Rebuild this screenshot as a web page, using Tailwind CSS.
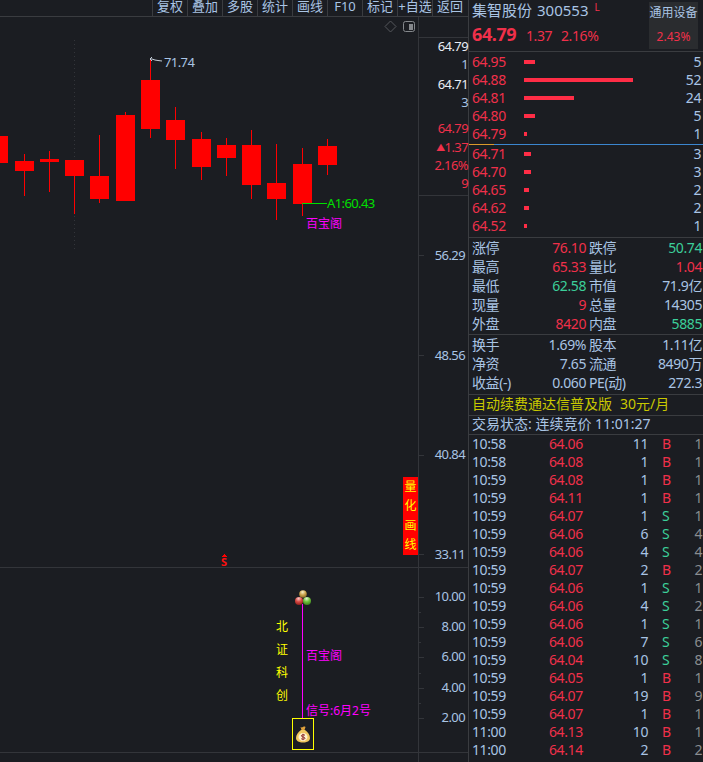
<!DOCTYPE html>
<html lang="zh">
<head>
<meta charset="UTF-8">
<title>集智股份</title>
<script src="https://cdn.jsdelivr.net/npm/@tailwindcss/browser@4"></script>
</head>
<body class="bg-[#1b1d22] overflow-hidden font-['Noto_Sans','Noto_Sans_CJK_SC',sans-serif] text-[14px] text-[#a9c4e4]">
<div class="flex w-[703px] h-[762px] overflow-hidden">

  <!-- chart side -->
  <div class="w-[469px] h-full flex flex-col border-r border-[#3a3c40] shrink-0">
    <div class="h-[17px] flex justify-end border-b border-[#3a3c40] overflow-hidden leading-[12px] text-[13px] shrink-0 pr-[1px]">
      <div class="w-[35px] border-l border-[#3a3c40] text-center">复权</div>
      <div class="w-[35px] border-l border-[#3a3c40] text-center">叠加</div>
      <div class="w-[35px] border-l border-[#3a3c40] text-center">多股</div>
      <div class="w-[35px] border-l border-[#3a3c40] text-center">统计</div>
      <div class="w-[35px] border-l border-[#3a3c40] text-center">画线</div>
      <div class="w-[35px] border-l border-[#3a3c40] text-center">F10</div>
      <div class="w-[35px] border-l border-[#3a3c40] text-center">标记</div>
      <div class="w-[35px] border-l border-[#3a3c40] text-center whitespace-nowrap">+自选</div>
      <div class="w-[35px] border-l border-[#3a3c40] text-center">返回</div>
    </div>

    <!-- free canvas: candles, axis labels and signals sit at their chart positions -->
    <div class="relative flex-1 text-[13px] tracking-[-0.6px]">
      <svg class="absolute left-0 top-0" width="468" height="745" viewBox="0 17 468 745" shape-rendering="crispEdges">
        <line x1="74.5" y1="40" x2="74.5" y2="250" stroke="#33353a" stroke-dasharray="1 3"/>
        <line x1="418.5" y1="17" x2="418.5" y2="762" stroke="#33353a"/>
        <line x1="418" y1="37.5" x2="468" y2="37.5" stroke="#33353a"/>
        <line x1="418" y1="195.5" x2="468" y2="195.5" stroke="#33353a"/>
        <line x1="0" y1="567.5" x2="468" y2="567.5" stroke="#33353a"/>
        <line x1="0" y1="752.5" x2="468" y2="752.5" stroke="#33353a"/>
        <g fill="#ff0000">
          <rect x="0" y="136" width="8" height="27"/>
          <rect x="24" y="154" width="1" height="42"/><rect x="15" y="161" width="19" height="10"/>
          <rect x="49" y="151" width="1" height="41"/><rect x="40" y="159" width="19" height="3"/>
          <rect x="74" y="160" width="1" height="54"/><rect x="65" y="160" width="19" height="16"/>
          <rect x="99" y="135" width="1" height="68"/><rect x="90" y="176" width="19" height="23"/>
          <rect x="125" y="112" width="1" height="89"/><rect x="116" y="115" width="19" height="86"/>
          <rect x="150" y="58" width="1" height="80"/><rect x="141" y="80" width="19" height="49"/>
          <rect x="175" y="107" width="1" height="62"/><rect x="166" y="120" width="19" height="20"/>
          <rect x="201" y="132" width="1" height="48"/><rect x="192" y="139" width="19" height="28"/>
          <rect x="226" y="138" width="1" height="38"/><rect x="217" y="145" width="19" height="13"/>
          <rect x="251" y="130" width="1" height="69"/><rect x="242" y="145" width="19" height="40"/>
          <rect x="276" y="144" width="1" height="76"/><rect x="267" y="183" width="19" height="16"/>
          <rect x="302" y="148" width="1" height="68"/><rect x="293" y="164" width="19" height="40"/>
          <rect x="327" y="139" width="1" height="36"/><rect x="318" y="146" width="19" height="19"/>
          <!-- small arrow above the S marker -->
          <rect x="224" y="554" width="1" height="1"/><rect x="223" y="555" width="3" height="1"/><rect x="222" y="556" width="5" height="1"/>
        </g>
        <line x1="302" y1="203.5" x2="327" y2="203.5" stroke="#00e000"/>
        <!-- axis ticks -->
        <g stroke="#33353a">
          <line x1="418" y1="255.5" x2="424" y2="255.5"/><line x1="418" y1="355.5" x2="424" y2="355.5"/>
          <line x1="418" y1="455.5" x2="424" y2="455.5"/><line x1="418" y1="554.5" x2="424" y2="554.5"/>
          <line x1="418" y1="597.5" x2="424" y2="597.5"/><line x1="418" y1="612.5" x2="421" y2="612.5"/>
          <line x1="418" y1="627.5" x2="424" y2="627.5"/><line x1="418" y1="642.5" x2="421" y2="642.5"/>
          <line x1="418" y1="657.5" x2="424" y2="657.5"/><line x1="418" y1="673.5" x2="421" y2="673.5"/>
          <line x1="418" y1="688.5" x2="424" y2="688.5"/><line x1="418" y1="703.5" x2="421" y2="703.5"/>
          <line x1="418" y1="718.5" x2="424" y2="718.5"/>
        </g>
        <rect x="302" y="604" width="1" height="114" fill="#ff00ff"/>
      </svg>

      <!-- top-right tools -->
      <svg class="absolute left-[384px] top-[3px]" width="32" height="14" viewBox="0 0 32 14" fill="none">
        <path d="M6.500 1l5.500 5.500-5.500 5.500-5.500-5.500z" stroke="#55575c"/>
        <rect x="19.500" y="1.500" width="11" height="10" rx="2" stroke="#85888c"/>
        <rect x="25" y="4" width="4" height="6" fill="#85888c"/>
      </svg>

      <!-- price high marker -->
      <svg class="absolute left-[149px] top-[39px]" width="14" height="8" viewBox="0 0 14 8" fill="none" stroke="#c4cdd8">
        <path d="M1 3h2M1 3l2-2M1 3l2 2M3 3l3 1 3 .5 4 .5"/>
      </svg>
      <div class="absolute left-[164px] top-[36px] leading-[18px]">71.74</div>
      <div class="absolute left-[327px] top-[177px] leading-[18px] text-[#00e000]">A1:60.43</div>
      <div class="absolute left-[306px] top-[198px] leading-[18px] text-[#ff00ff] text-[12px] tracking-normal">百宝阁</div>

      <!-- axis labels -->
      <div class="absolute left-[419px] w-[49px] text-right top-[21px] leading-[16px] text-[#e8eef6]">64.79</div>
      <div class="absolute left-[419px] w-[49px] text-right top-[39px] leading-[16px]">1</div>
      <div class="absolute left-[419px] w-[49px] text-right top-[59px] leading-[16px] text-[#e8eef6]">64.71</div>
      <div class="absolute left-[419px] w-[49px] text-right top-[77px] leading-[16px]">3</div>
      <div class="absolute left-[419px] w-[49px] text-right top-[103px] leading-[16px] text-[#f0304a]">64.79</div>
      <div class="absolute left-[419px] w-[49px] text-right top-[122px] leading-[16px] text-[#f0304a] whitespace-nowrap"><span class="text-[9px] align-[1px]">▲</span>1.37</div>
      <div class="absolute left-[419px] w-[49px] text-right top-[140px] leading-[16px] text-[#f0304a]">2.16%</div>
      <div class="absolute left-[419px] w-[49px] text-right top-[158px] leading-[16px] text-[#f0304a]">9</div>
      <div class="absolute left-[419px] w-[46px] text-right top-[230px] leading-[16px]">56.29</div>
      <div class="absolute left-[419px] w-[46px] text-right top-[330px] leading-[16px]">48.56</div>
      <div class="absolute left-[419px] w-[46px] text-right top-[429px] leading-[16px]">40.84</div>
      <div class="absolute left-[419px] w-[46px] text-right top-[529px] leading-[16px]">33.11</div>
      <div class="absolute left-[419px] w-[46px] text-right top-[571px] leading-[16px]">10.00</div>
      <div class="absolute left-[419px] w-[46px] text-right top-[601px] leading-[16px]">8.00</div>
      <div class="absolute left-[419px] w-[46px] text-right top-[631px] leading-[16px]">6.00</div>
      <div class="absolute left-[419px] w-[46px] text-right top-[662px] leading-[16px]">4.00</div>
      <div class="absolute left-[419px] w-[46px] text-right top-[692px] leading-[16px]">2.00</div>

      <!-- 量化画线 tag -->
      <div class="absolute left-[403px] top-[460px] w-[15px] h-[78px] bg-[#ff0000] text-[#ffff00] text-[12px] tracking-normal flex flex-col justify-around items-center leading-[14px]">
        <span>量</span><span>化</span><span>画</span><span>线</span>
      </div>
      <div class="absolute left-[221px] top-[539px] text-[#ff1010] text-[11px] leading-[11px] font-bold tracking-normal">S</div>

      <!-- signal pane -->
      <svg class="absolute left-[294px] top-[572px]" width="18" height="18" viewBox="0 0 18 18">
        <defs>
          <radialGradient id="ballGold" cx=".45" cy=".25" r=".8"><stop offset="0" stop-color="#f8f0c8"/><stop offset=".5" stop-color="#c9a24a"/><stop offset="1" stop-color="#7d6020"/></radialGradient>
          <radialGradient id="ballRed" cx=".45" cy=".2" r=".8"><stop offset="0" stop-color="#f6c8c6"/><stop offset=".5" stop-color="#d94a44"/><stop offset="1" stop-color="#8f1f1c"/></radialGradient>
          <radialGradient id="ballGreen" cx=".45" cy=".2" r=".8"><stop offset="0" stop-color="#e2f6cf"/><stop offset=".5" stop-color="#6fc23a"/><stop offset="1" stop-color="#3c7d1c"/></radialGradient>
        </defs>
        <circle cx="9" cy="5" r="3.800" fill="url(#ballGold)"/>
        <circle cx="5" cy="12" r="4" fill="url(#ballRed)"/>
        <circle cx="13" cy="12" r="4" fill="url(#ballGreen)"/>
      </svg>
      <div class="absolute left-[276px] top-[603px] w-[12px] text-[#ffff00] text-[12px] tracking-normal flex flex-col gap-[9px] leading-[14px]">
        <span>北</span><span>证</span><span>科</span><span>创</span>
      </div>
      <div class="absolute left-[306px] top-[630px] leading-[18px] text-[#ff00ff] text-[12px] tracking-normal">百宝阁</div>
      <div class="absolute left-[306px] top-[685px] leading-[18px] text-[#ff00ff] text-[12px] tracking-normal whitespace-nowrap">信号:6月2号</div>
      <div class="absolute left-[292px] top-[701px] w-[22px] h-[32px] border border-[#ffff00] flex items-center justify-center">
        <svg width="14" height="17" viewBox="0 0 14 17">
          <path d="M4.500 1c1 .6 1.500.6 2.500 0s1.500-.6 2.500 0l-1 3h-3z" fill="#e0a23c"/>
          <path d="M5 4h4c3 2 5 5 5 8 0 3-3 4.500-7 4.500s-7-1.500-7-4.500c0-3 2-6 5-8z" fill="#f0c860"/>
          <ellipse cx="7" cy="11" rx="4.500" ry="4" fill="#fff3d0"/>
          <path d="M9 9.300c-1-.9-3.600-.8-3.600.6 0 1.500 3.600.8 3.600 2.300 0 1.300-2.800 1.300-3.800.5M7 7.800v6.400" fill="none" stroke="#8e2d28" stroke-width="1"/>
        </svg>
      </div>
    </div>
  </div>

  <!-- quote side -->
  <div class="flex-1 flex flex-col min-w-0 pl-[3px] leading-[18px] whitespace-nowrap overflow-hidden tracking-[-0.4px]">
    <div class="h-[51px] relative shrink-0 -ml-[3px] pl-[3px]">
      <div class="flex items-baseline gap-[5px] tracking-normal">
        <span class="text-[15px] leading-[20px]">集智股份</span>
        <span class="text-[15px] leading-[20px]">300553</span>
        <span class="text-[#f0304a] text-[10px] leading-[12px] self-start ml-[1px] mt-[1px]">L</span>
      </div>
      <div class="flex items-baseline text-[#f0304a] mt-[3px] leading-[22px]">
        <span class="text-[18px] font-bold w-[54px]">64.79</span>
        <span class="w-[35px]">1.37</span>
        <span>2.16%</span>
      </div>
      <div class="absolute right-[5px] top-[2px] w-[49px] h-[47px] bg-[#2a2c2f] text-center text-[12px] tracking-normal">
        <div class="leading-[20px] mt-[1px]">通用设备</div>
        <div class="leading-[20px] mt-[4px] text-[#f0304a]">2.43%</div>
      </div>
    </div>

    <div class="border-t border-[#3a3c40] -ml-[3px] pl-[3px] pr-[2px] pt-[1px] h-[93px] flex flex-col shrink-0">
      <div class="h-[18px] flex items-center"><span class="w-[52px] text-[#f0304a]">64.95</span><i class="block h-[4px] bg-[#ff2d46] w-[11px]"></i><span class="ml-auto">5</span></div>
      <div class="h-[18px] flex items-center"><span class="w-[52px] text-[#f0304a]">64.88</span><i class="block h-[4px] bg-[#ff2d46] w-[109px]"></i><span class="ml-auto">52</span></div>
      <div class="h-[18px] flex items-center"><span class="w-[52px] text-[#f0304a]">64.81</span><i class="block h-[4px] bg-[#ff2d46] w-[50px]"></i><span class="ml-auto">24</span></div>
      <div class="h-[18px] flex items-center"><span class="w-[52px] text-[#f0304a]">64.80</span><i class="block h-[4px] bg-[#ff2d46] w-[11px]"></i><span class="ml-auto">5</span></div>
      <div class="h-[18px] flex items-center"><span class="w-[52px] text-[#f0304a]">64.79</span><i class="block h-[4px] bg-[#ff2d46] w-[3px]"></i><span class="ml-auto">1</span></div>
    </div>
    <div class="h-[1px] -ml-[3px] bg-[#3b86cf] shrink-0"><div class="h-full w-[25px] bg-[#d99a2b]"></div></div>
    <div class="h-[92px] pr-[2px] flex flex-col shrink-0">
      <div class="h-[18px] flex items-center"><span class="w-[52px] text-[#f0304a]">64.71</span><i class="block h-[4px] bg-[#ff2d46] w-[7px]"></i><span class="ml-auto">3</span></div>
      <div class="h-[18px] flex items-center"><span class="w-[52px] text-[#f0304a]">64.70</span><i class="block h-[4px] bg-[#ff2d46] w-[7px]"></i><span class="ml-auto">3</span></div>
      <div class="h-[18px] flex items-center"><span class="w-[52px] text-[#f0304a]">64.65</span><i class="block h-[4px] bg-[#ff2d46] w-[5px]"></i><span class="ml-auto">2</span></div>
      <div class="h-[18px] flex items-center"><span class="w-[52px] text-[#f0304a]">64.62</span><i class="block h-[4px] bg-[#ff2d46] w-[5px]"></i><span class="ml-auto">2</span></div>
      <div class="h-[18px] flex items-center"><span class="w-[52px] text-[#f0304a]">64.52</span><i class="block h-[4px] bg-[#ff2d46] w-[3px]"></i><span class="ml-auto">1</span></div>
    </div>

    <div class="border-t border-[#3a3c40] -ml-[3px] pl-[3px] pr-[1px] h-[97px] shrink-0 grid grid-cols-[117px_1fr] auto-rows-[19px] items-start leading-[19px]">
      <div class="flex justify-between pr-[3px]"><span>涨停</span><span class="text-[#f0304a]">76.10</span></div>
      <div class="flex justify-between"><span>跌停</span><span class="text-[#3ccf9a]">50.74</span></div>
      <div class="flex justify-between pr-[3px]"><span>最高</span><span class="text-[#f0304a]">65.33</span></div>
      <div class="flex justify-between"><span>量比</span><span class="text-[#f0304a]">1.04</span></div>
      <div class="flex justify-between pr-[3px]"><span>最低</span><span class="text-[#3ccf9a]">62.58</span></div>
      <div class="flex justify-between"><span>市值</span><span>71.9亿</span></div>
      <div class="flex justify-between pr-[3px]"><span>现量</span><span class="text-[#f0304a]">9</span></div>
      <div class="flex justify-between"><span>总量</span><span>14305</span></div>
      <div class="flex justify-between pr-[3px]"><span>外盘</span><span class="text-[#f0304a]">8420</span></div>
      <div class="flex justify-between"><span>内盘</span><span class="text-[#3ccf9a]">5885</span></div>
    </div>

    <div class="border-t border-[#3a3c40] -ml-[3px] pl-[3px] pr-[1px] h-[60px] shrink-0 grid grid-cols-[117px_1fr] auto-rows-[19px] items-start leading-[19px]">
      <div class="flex justify-between pr-[3px]"><span>换手</span><span>1.69%</span></div>
      <div class="flex justify-between"><span>股本</span><span>1.11亿</span></div>
      <div class="flex justify-between pr-[3px]"><span>净资</span><span>7.65</span></div>
      <div class="flex justify-between"><span>流通</span><span>8490万</span></div>
      <div class="flex justify-between pr-[3px]"><span>收益(-)</span><span>0.060</span></div>
      <div class="flex justify-between"><span>PE(动)</span><span>272.3</span></div>
    </div>

    <div class="border-t border-[#3a3c40] -ml-[3px] pl-[3px] h-[21px] pb-[2px] shrink-0 flex items-center text-[#c8c800] tracking-normal">
      <span>自动续费通达信普及版</span><span class="ml-[8px]">30元/月</span>
    </div>
    <div class="border-t border-[#3a3c40] -ml-[3px] pl-[3px] h-[19px] pb-[2px] shrink-0 flex items-center tracking-normal">
      交易状态: 连续竞价 11:01:27
    </div>

    <div class="border-t border-[#3a3c40] -ml-[3px] pl-[3px] pr-[1px]">
      <div class="h-[18px] flex"><span class="w-[77px]">10:58</span><span class="w-[58px] text-[#f0304a]">64.06</span><span class="w-[41px] text-right">11</span><span class="w-[28px] pl-[14px] text-[#f0304a]">B</span><span class="ml-auto text-[#8a8d90]">1</span></div>
      <div class="h-[18px] flex"><span class="w-[77px]">10:58</span><span class="w-[58px] text-[#f0304a]">64.08</span><span class="w-[41px] text-right">1</span><span class="w-[28px] pl-[14px] text-[#f0304a]">B</span><span class="ml-auto text-[#8a8d90]">1</span></div>
      <div class="h-[18px] flex"><span class="w-[77px]">10:59</span><span class="w-[58px] text-[#f0304a]">64.08</span><span class="w-[41px] text-right">1</span><span class="w-[28px] pl-[14px] text-[#f0304a]">B</span><span class="ml-auto text-[#8a8d90]">1</span></div>
      <div class="h-[18px] flex"><span class="w-[77px]">10:59</span><span class="w-[58px] text-[#f0304a]">64.11</span><span class="w-[41px] text-right">1</span><span class="w-[28px] pl-[14px] text-[#f0304a]">B</span><span class="ml-auto text-[#8a8d90]">1</span></div>
      <div class="h-[18px] flex"><span class="w-[77px]">10:59</span><span class="w-[58px] text-[#f0304a]">64.07</span><span class="w-[41px] text-right">1</span><span class="w-[28px] pl-[14px] text-[#3ccf9a]">S</span><span class="ml-auto text-[#8a8d90]">1</span></div>
      <div class="h-[18px] flex"><span class="w-[77px]">10:59</span><span class="w-[58px] text-[#f0304a]">64.06</span><span class="w-[41px] text-right">6</span><span class="w-[28px] pl-[14px] text-[#3ccf9a]">S</span><span class="ml-auto text-[#8a8d90]">4</span></div>
      <div class="h-[18px] flex"><span class="w-[77px]">10:59</span><span class="w-[58px] text-[#f0304a]">64.06</span><span class="w-[41px] text-right">4</span><span class="w-[28px] pl-[14px] text-[#3ccf9a]">S</span><span class="ml-auto text-[#8a8d90]">4</span></div>
      <div class="h-[18px] flex"><span class="w-[77px]">10:59</span><span class="w-[58px] text-[#f0304a]">64.07</span><span class="w-[41px] text-right">2</span><span class="w-[28px] pl-[14px] text-[#f0304a]">B</span><span class="ml-auto text-[#8a8d90]">2</span></div>
      <div class="h-[18px] flex"><span class="w-[77px]">10:59</span><span class="w-[58px] text-[#f0304a]">64.06</span><span class="w-[41px] text-right">1</span><span class="w-[28px] pl-[14px] text-[#3ccf9a]">S</span><span class="ml-auto text-[#8a8d90]">1</span></div>
      <div class="h-[18px] flex"><span class="w-[77px]">10:59</span><span class="w-[58px] text-[#f0304a]">64.06</span><span class="w-[41px] text-right">4</span><span class="w-[28px] pl-[14px] text-[#3ccf9a]">S</span><span class="ml-auto text-[#8a8d90]">2</span></div>
      <div class="h-[18px] flex"><span class="w-[77px]">10:59</span><span class="w-[58px] text-[#f0304a]">64.06</span><span class="w-[41px] text-right">1</span><span class="w-[28px] pl-[14px] text-[#3ccf9a]">S</span><span class="ml-auto text-[#8a8d90]">1</span></div>
      <div class="h-[18px] flex"><span class="w-[77px]">10:59</span><span class="w-[58px] text-[#f0304a]">64.06</span><span class="w-[41px] text-right">7</span><span class="w-[28px] pl-[14px] text-[#3ccf9a]">S</span><span class="ml-auto text-[#8a8d90]">6</span></div>
      <div class="h-[18px] flex"><span class="w-[77px]">10:59</span><span class="w-[58px] text-[#f0304a]">64.04</span><span class="w-[41px] text-right">10</span><span class="w-[28px] pl-[14px] text-[#3ccf9a]">S</span><span class="ml-auto text-[#8a8d90]">8</span></div>
      <div class="h-[18px] flex"><span class="w-[77px]">10:59</span><span class="w-[58px] text-[#f0304a]">64.05</span><span class="w-[41px] text-right">1</span><span class="w-[28px] pl-[14px] text-[#f0304a]">B</span><span class="ml-auto text-[#8a8d90]">1</span></div>
      <div class="h-[18px] flex"><span class="w-[77px]">10:59</span><span class="w-[58px] text-[#f0304a]">64.07</span><span class="w-[41px] text-right">19</span><span class="w-[28px] pl-[14px] text-[#f0304a]">B</span><span class="ml-auto text-[#8a8d90]">9</span></div>
      <div class="h-[18px] flex"><span class="w-[77px]">10:59</span><span class="w-[58px] text-[#f0304a]">64.07</span><span class="w-[41px] text-right">1</span><span class="w-[28px] pl-[14px] text-[#f0304a]">B</span><span class="ml-auto text-[#8a8d90]">1</span></div>
      <div class="h-[18px] flex"><span class="w-[77px]">11:00</span><span class="w-[58px] text-[#f0304a]">64.13</span><span class="w-[41px] text-right">10</span><span class="w-[28px] pl-[14px] text-[#f0304a]">B</span><span class="ml-auto text-[#8a8d90]">1</span></div>
      <div class="h-[18px] flex"><span class="w-[77px]">11:00</span><span class="w-[58px] text-[#f0304a]">64.14</span><span class="w-[41px] text-right">2</span><span class="w-[28px] pl-[14px] text-[#f0304a]">B</span><span class="ml-auto text-[#8a8d90]">2</span></div>
    </div>
  </div>
</div>
</body>
</html>
